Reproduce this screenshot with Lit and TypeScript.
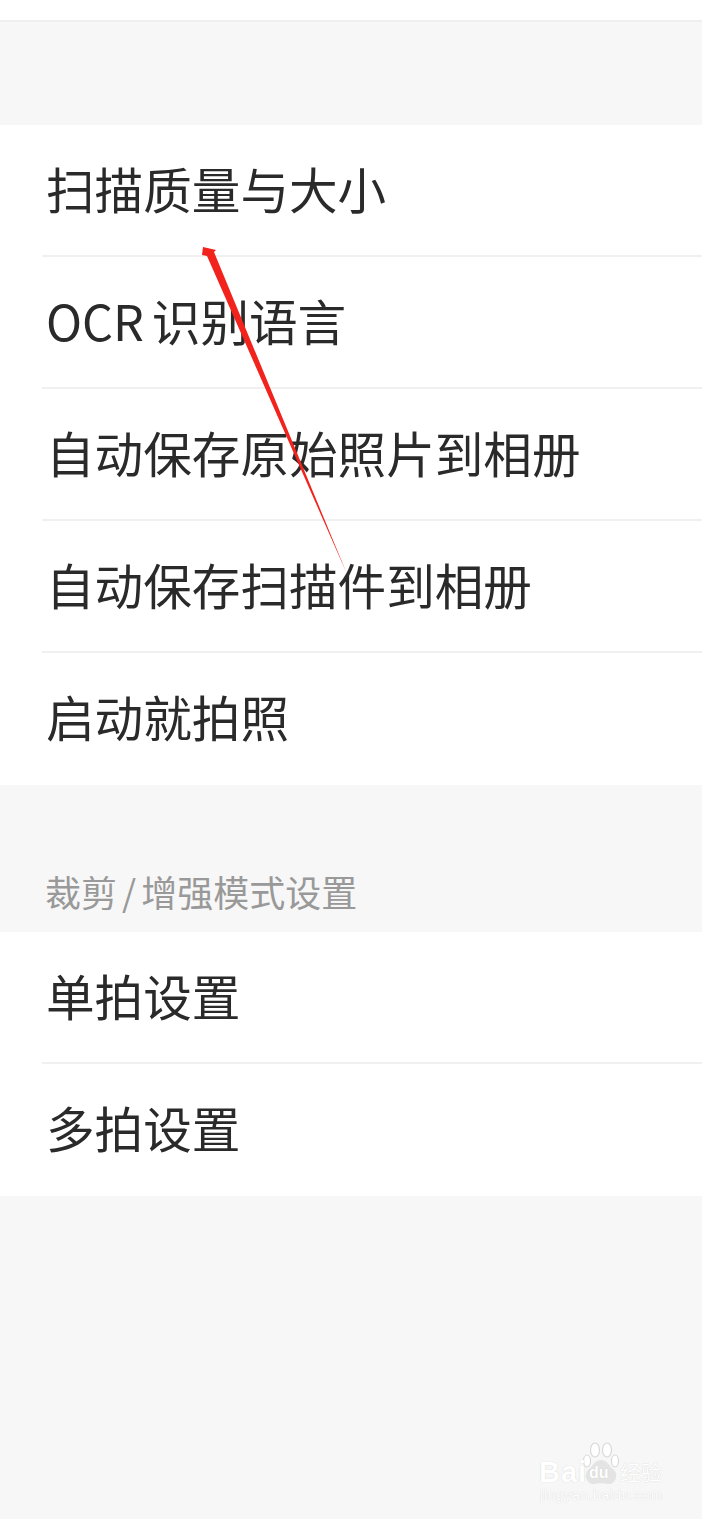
import { LitElement, html, css } from 'lit';
import { customElement } from 'lit/decorators.js';

const firstGroup = ['扫描质量与大小', 'OCR 识别语言', '自动保存原始照片到相册', '自动保存扫描件到相册', '启动就拍照'];
const secondGroup = ['单拍设置', '多拍设置'];

@customElement('app-root')
export class AppRoot extends LitElement {
  static styles = css`
    :host {
      display: block;
      position: relative;
      width: 702px;
      height: 1519px;
      overflow: hidden;
      background: #f7f7f7;
      font-family: "Noto Sans CJK SC", "Liberation Sans", sans-serif;
      color: #2a2a2a;
    }

    .top {
      height: 20px;
      background: #fff;
      border-bottom: 2px solid #efefef;
    }

    .spacer {
      height: 103px;
    }

    .group {
      background: #fff;
      padding-bottom: 2px;
    }

    .row {
      height: 130px;
      box-sizing: border-box;
      margin-left: 42px;
      padding: 0 0 4px 4px;
      display: flex;
      align-items: center;
      font-size: 48.6px;
      line-height: 1;
      word-spacing: -3px;
      white-space: pre;
    }

    .divider {
      height: 2px;
      margin-left: 42px;
      background: #f0f0f0;
    }

    .section {
      height: 147px;
      box-sizing: border-box;
      padding: 86px 0 0 45px;
      font-size: 36px;
      line-height: 40px;
      word-spacing: -3px;
      color: #999;
      white-space: pre;
    }

    .arrow {
      position: absolute;
      left: 0;
      top: 0;
      pointer-events: none;
    }

    .mark {
      position: absolute;
      left: 537px;
      top: 1442px;
      width: 130px;
      height: 64px;
      color: #fff;
      text-shadow: 0 0 1px #c8c8c8;
      font-family: "Liberation Sans", "Noto Sans CJK SC", sans-serif;
    }

    .mark svg {
      position: absolute;
      left: 45px;
      top: 0;
    }

    .bai {
      position: absolute;
      left: 2px;
      top: 14px;
      font-size: 29px;
      line-height: 32px;
      font-weight: bold;
      letter-spacing: 1px;
    }

    .du {
      position: absolute;
      left: 52px;
      top: 22px;
      font-size: 16px;
      line-height: 18px;
      font-weight: bold;
    }

    .jy {
      position: absolute;
      left: 83px;
      top: 19px;
      font-size: 21px;
      line-height: 24px;
    }

    .url {
      position: absolute;
      left: 3px;
      top: 45px;
      font-size: 14px;
      line-height: 17px;
      letter-spacing: 0.6px;
      white-space: nowrap;
    }
  `;

  private rows(items: string[]) {
    return items.map((t, i) => html`
      ${i > 0 ? html`<div class="divider"></div>` : ''}
      <div class="row">${t}</div>
    `);
  }

  render() {
    return html`
      <div class="top"></div>
      <div class="spacer"></div>
      <div class="group">${this.rows(firstGroup)}</div>
      <div class="section">裁剪 / 增强模式设置</div>
      <div class="group">${this.rows(secondGroup)}</div>

      <svg class="arrow" width="702" height="700" viewBox="0 0 702 700">
        <path d="M203 247 L216 250 L214 252 L347 574 L207 256 L202 255 Z" fill="#f1231c" />
      </svg>

      <div class="mark">
        <svg width="38" height="44" viewBox="0 0 38 44">
          <g fill="#fff" stroke="#d8d8d8" stroke-width="1.2">
            <ellipse cx="5" cy="19" rx="3.5" ry="6" />
            <ellipse cx="13" cy="8" rx="4.5" ry="7" />
            <ellipse cx="25" cy="8" rx="4.5" ry="7" />
            <ellipse cx="33" cy="19" rx="3.5" ry="6" />
          </g>
          <path d="M19 18 C25 18 27 24 32 28 C37 33 33 43 26 42 C22 41 16 41 12 42 C5 43 1 33 6 28 C11 24 13 18 19 18 Z" fill="#e4e4e4" />
        </svg>
        <span class="bai">Bai</span>
        <span class="du">du</span>
        <span class="jy">经验</span>
        <span class="url">jingyan.baidu.com</span>
      </div>
    `;
  }
}
